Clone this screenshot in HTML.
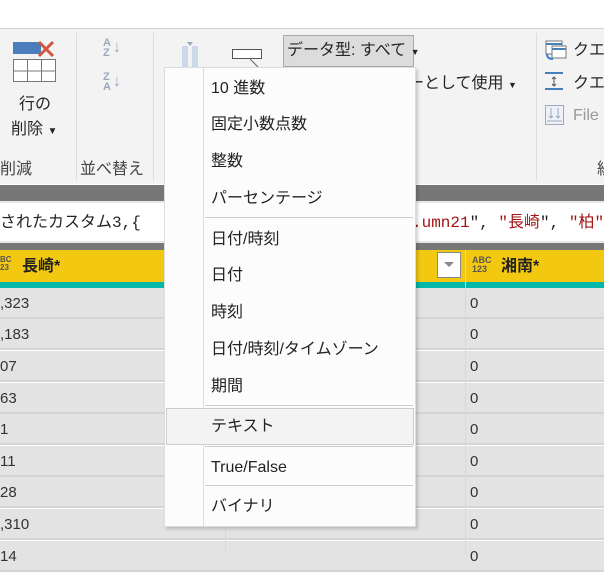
<html><head><style>
body{margin:0;width:604px;height:554px;overflow:hidden;background:#fff;font-family:"Liberation Sans","Noto Sans CJK JP",sans-serif;position:relative;color:#252525}
div,span{position:absolute}
.t{white-space:nowrap;font-size:16px;line-height:20px}
.row{left:0;width:604px;height:29px;background:#e3e3e3;border-bottom:2px solid #d4d4d4}
.v{font-size:15px;line-height:20px;top:6px;color:#333}
.mi{left:46px;font-size:16px;line-height:20px;color:#222;white-space:nowrap}
.sep{left:40px;width:208px;height:1px;background:#ccc}
</style></head><body>
<div style="left:0;top:28px;width:604px;height:1px;background:#d0d0d0"></div>
<div style="left:0;top:29px;width:604px;height:155px;background:#f3f3f3"></div>
<div style="left:76px;top:33px;width:1px;height:148px;background:#ddd"></div>
<div style="left:153px;top:33px;width:1px;height:148px;background:#ddd"></div>
<div style="left:536px;top:33px;width:1px;height:148px;background:#ddd"></div>
<svg style="position:absolute;left:12px;top:38px" width="48" height="48"><rect x="1" y="4" width="28" height="12" fill="#4a7ebb"/><path d="M27 4l14 14M41 4L27 18" stroke="#d2553c" stroke-width="3"/><rect x="1.5" y="21.5" width="42" height="22" fill="#fff" stroke="#777"/><path d="M1 33h43M15.5 21v23M29.5 21v23" stroke="#777"/></svg>
<div class="t" style="left:19px;top:95px">行の</div>
<div class="t" style="left:11px;top:120px">削除 <span style="position:static;font-size:10px">▼</span></div>
<div class="t" style="left:0;top:160px;color:#444">削減</div>
<div style="left:103px;top:38px;font-size:11px;font-weight:bold;color:#9aa8c0;line-height:10px">A<br>Z</div>
<div style="left:113px;top:38px;font-size:16px;line-height:20px;color:#9aa8c0">↓</div>
<div style="left:103px;top:72px;font-size:11px;font-weight:bold;color:#9aa8c0;line-height:10px">Z<br>A</div>
<div style="left:113px;top:72px;font-size:16px;line-height:20px;color:#9aa8c0">↓</div>
<div class="t" style="left:80px;top:160px;color:#444">並べ替え</div>
<svg style="position:absolute;left:168px;top:40px" width="100" height="30"><path d="M19 2h6l-3 4z" fill="#9aa8c0"/><rect x="14" y="6" width="6" height="24" fill="#cdd9ea"/><rect x="24" y="6" width="6" height="24" fill="#cdd9ea"/><rect x="64.5" y="9.5" width="29" height="9" fill="#fff" stroke="#555"/><path d="M82 19l8 8" stroke="#666"/></svg>
<div style="left:283px;top:35px;width:129px;height:30px;background:#dcdcdc;border:1px solid #aaa"></div>
<div class="t" style="left:287px;top:41px">データ型: すべて <span style="position:static;font-size:9px">▼</span></div>
<div class="t" style="left:408px;top:74px">ーとして使用 <span style="position:static;font-size:9px">▼</span></div>
<svg style="position:absolute;left:544px;top:40px" width="24" height="90"><rect x="2" y="1" width="16" height="13" fill="#fff" stroke="#777"/><rect x="8" y="6" width="14" height="12" fill="#fff" stroke="#777"/><path d="M2 4h16M8 9h14" stroke="#4a7ebb" stroke-width="2"/><path d="M3 14q0 5 6 5" stroke="#3d7dc8" stroke-width="2" fill="none"/><path d="M1 33h18M1 49h18" stroke="#4a7ebb" stroke-width="2"/><path d="M10 37v9M8 39l2-2 2 2M8 44l2 2 2-2" stroke="#555" fill="none"/><rect x="1.5" y="65.5" width="18" height="19" fill="#eef2f8" stroke="#9aa8c0"/><path d="M7 68v10M5 76l2 2 2-2M14 68v10M12 76l2 2 2-2M3 81h15" stroke="#9aa8c0" fill="none"/></svg>
<div class="t" style="left:573px;top:41px">クエ</div>
<div class="t" style="left:573px;top:74px">クエ</div>
<div class="t" style="left:573px;top:106px;color:#999">File</div>
<div class="t" style="left:597px;top:160px;color:#444">組</div>
<div style="left:0;top:185px;width:604px;height:16px;background:#777"></div>
<div style="left:0;top:201px;width:604px;height:2px;background:#e8e8e8"></div>
<div style="left:0;top:203px;width:604px;height:38px;background:#fff"></div>
<div class="t" style="left:0;top:213px;font-family:'Liberation Mono','Noto Sans CJK JP',monospace;font-size:16px">されたカスタム3,{</div>
<div class="t" style="left:412px;top:213px;font-family:'Liberation Mono','Noto Sans CJK JP',monospace;font-size:16px;color:#a31515">.umn21<span style="position:static;color:#222">", </span>"長崎<span style="position:static;color:#222">", </span>"柏"</div>
<div style="left:0;top:241px;width:604px;height:2px;background:#e8e8e8"></div>
<div style="left:0;top:243px;width:604px;height:7px;background:#777"></div>
<div style="left:0;top:250px;width:604px;height:32px;background:#f2c811"></div>
<div style="left:0;top:282px;width:604px;height:6px;background:#01b8aa"></div>
<div style="left:465px;top:250px;width:1px;height:304px;background:#d8d8d8"></div>
<div style="left:0;top:256px;font-size:8px;line-height:8px;color:#555;font-weight:bold">BC<br>23</div>
<div class="t" style="left:22px;top:257px;font-weight:bold;color:#222">長崎*</div>
<div style="left:437px;top:252px;width:22px;height:24px;background:#fff;border:1px solid #888"></div>
<div style="left:444px;top:262px;width:0;height:0;border-left:5px solid transparent;border-right:5px solid transparent;border-top:5px solid #888"></div>
<div style="left:472px;top:256px;font-size:9px;line-height:9px;color:#555;font-weight:bold">ABC<br>123</div>
<div class="t" style="left:501px;top:257px;font-weight:bold;color:#222">湘南*</div>
<div class="row" style="top:288px"><span class="v" style="left:0">,323</span><span class="v" style="left:470px">0</span></div>
<div class="row" style="top:319px"><span class="v" style="left:0">,183</span><span class="v" style="left:470px">0</span></div>
<div class="row" style="top:351px"><span class="v" style="left:0">07</span><span class="v" style="left:470px">0</span></div>
<div class="row" style="top:383px"><span class="v" style="left:0">63</span><span class="v" style="left:470px">0</span></div>
<div class="row" style="top:414px"><span class="v" style="left:0">1</span><span class="v" style="left:470px">0</span></div>
<div class="row" style="top:446px"><span class="v" style="left:0">11</span><span class="v" style="left:470px">0</span></div>
<div class="row" style="top:477px"><span class="v" style="left:0">28</span><span class="v" style="left:470px">0</span></div>
<div class="row" style="top:509px"><span class="v" style="left:0">,310</span><span class="v" style="left:470px">0</span></div>
<div class="row" style="top:541px"><span class="v" style="left:0">14</span><span class="v" style="left:470px">0</span></div>
<div style="left:225px;top:288px;width:1px;height:266px;background:#d8d8d8"></div>
<div style="left:465px;top:288px;width:1px;height:266px;background:#d8d8d8"></div>
<div style="left:164px;top:67px;width:250px;height:458px;background:#fcfcfc;border:1px solid #ddd;box-shadow:2px 2px 3px rgba(0,0,0,0.18)">
<div style="left:38px;top:0;width:1px;height:458px;background:#ddd"></div>
<div class="mi" style="top:11px">10 進数</div>
<div class="mi" style="top:47px">固定小数点数</div>
<div class="mi" style="top:84px">整数</div>
<div class="mi" style="top:121px">パーセンテージ</div>
<div class="sep" style="top:149px"></div>
<div class="mi" style="top:162px">日付/時刻</div>
<div class="mi" style="top:198px">日付</div>
<div class="mi" style="top:235px">時刻</div>
<div class="mi" style="top:272px">日付/時刻/タイムゾーン</div>
<div class="mi" style="top:309px">期間</div>
<div class="sep" style="top:337px"></div>
<div style="left:1px;top:340px;width:246px;height:35px;background:#f3f3f3;border:1px solid #ccc"></div>
<div class="mi" style="top:349px">テキスト</div>
<div class="sep" style="top:378px"></div>
<div class="mi" style="top:390px">True/False</div>
<div class="sep" style="top:417px"></div>
<div class="mi" style="top:429px">バイナリ</div>
</div>
</body></html>
